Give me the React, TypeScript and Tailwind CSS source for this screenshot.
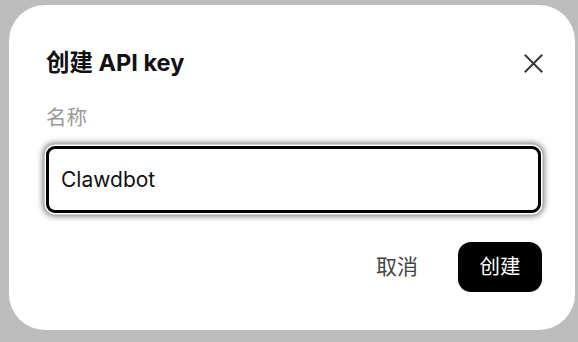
import * as React from "react";

function CloseIcon() {
  return (
    <svg width="19" height="19" viewBox="0 0 19 19" fill="none" stroke="#3a3a3a" strokeWidth="2" strokeLinecap="square">
      <path d="M1.5 1.5L17.5 17.5M17.5 1.5L1.5 17.5" />
    </svg>
  );
}

export default function App() {
  const [name, setName] = React.useState("Clawdbot");

  return (
    <div className="w-[578px] h-[342px] bg-[#bdbdbd] pt-[5px] pl-[9px] font-['Inter','Noto_Sans_CJK_SC',sans-serif]">
      <div className="w-[566px] h-[325px] bg-white rounded-[36px] pl-[37px] pr-[33px] pt-[43px]">
        {/* Header */}
        <div className="flex items-center justify-between h-[30px]">
          <h2 className="text-[23.5px] font-bold text-[#111] leading-[30px]">创建 API key</h2>
          <button className="flex items-center justify-center mr-[-1px]">
            <CloseIcon />
          </button>
        </div>

        <div className="mt-[26px] text-[20.5px] text-[#9a9a9a] leading-[28px]">名称</div>

        <div className="mt-[14px]">
          <input
            value={name}
            onChange={(e) => setName(e.target.value)}
            className="w-[495px] h-[67px] rounded-[9px] border-[3px] border-black px-[12px] text-[21px] text-[#111] outline-none shadow-[0_0_0_1.5px_#fff,0_0_6px_3px_rgba(0,0,0,0.55)]"
          />
        </div>

        <div className="mt-[29px] flex items-center justify-end gap-[40px]">
          <button className="text-[21px] text-[#444]">取消</button>
          <button className="h-[50px] w-[84px] rounded-[13px] bg-black text-white text-[20.5px]">创建</button>
        </div>
      </div>
    </div>
  );
}
